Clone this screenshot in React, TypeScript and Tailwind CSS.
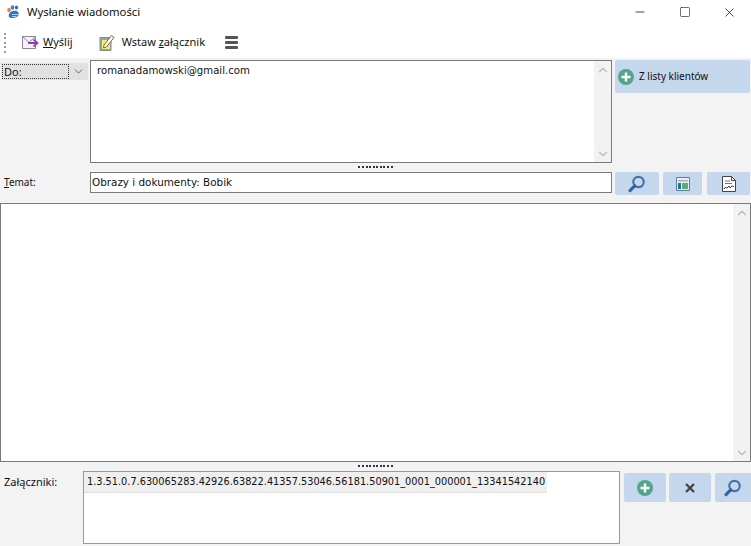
import { ChevronDown, ChevronUp, Minus, Square, X } from "lucide-react";

const FONT_UI = "font-['Noto_Sans','Open_Sans',sans-serif]";
const FONT_FIELD = "font-['DejaVu_Sans',sans-serif]";

function PlusIcon({ size = 16 }: { size?: number }) {
  return (
    <svg width={size} height={size} viewBox="0 0 16 16">
      <circle cx="8" cy="8" r="8" fill="#52a58a" />
      <path d="M8 3.5v9M3.5 8h9" stroke="#fff" strokeWidth="2.4" />
    </svg>
  );
}

function SearchIcon() {
  return (
    <svg width="18" height="18" viewBox="0 0 18 18" fill="none">
      <circle cx="10.5" cy="7" r="5.2" stroke="#3f74ad" strokeWidth="2.2" />
      <path d="M6.800 10.800 2 15.600" stroke="#2f629b" strokeWidth="3" strokeLinecap="round" />
    </svg>
  );
}

function ActionButton({ className, children }: { className: string; children: React.ReactNode }) {
  return (
    <div className={`flex shrink-0 items-center justify-center rounded-[2px] bg-[#c5d7ec] ${className}`}>
      {children}
    </div>
  );
}

function Splitter() {
  return (
    <div className="flex h-[8px] items-center justify-center gap-[1.6px] pb-[1px]">
      {Array.from({ length: 10 }).map((_, i) => (
        <span key={i} className="h-[2px] w-[2px] bg-[#333]" />
      ))}
    </div>
  );
}

function ScrollBar() {
  return (
    <div className="flex w-[17px] shrink-0 flex-col items-center justify-between bg-[#f2f2f2] text-[#bdbdbd]">
      <div className="flex h-[17px] items-center justify-center">
        <ChevronUp size={14} strokeWidth={2.4} />
      </div>
      <div className="flex h-[17px] items-center justify-center">
        <ChevronDown size={14} strokeWidth={2.4} />
      </div>
    </div>
  );
}

export default function App() {
  return (
    <div className={`flex h-[546px] w-[751px] flex-col overflow-hidden bg-[#f3f3f3] text-[11px] text-[#111] ${FONT_UI}`}>
      {/* Title + toolbar */}
      <div className="h-[58px] shrink-0 bg-white">
        <div className="flex h-[24px] items-center">
          <svg className="ml-[6px]" width="15" height="14" viewBox="0 0 15 14">
            <path d="M3 9c1-3 5-4 8-3 2 1 2 3 1 5-2 2-7 3-9 1-.5-1-.5-2 0-3z" fill="#2f78c0" />
            <ellipse cx="3" cy="5" rx="1.800" ry="2.200" fill="#e8873a" />
            <ellipse cx="6.500" cy="2.500" rx="1.800" ry="2.200" fill="#3b86cc" />
            <ellipse cx="10.500" cy="2.500" rx="1.600" ry="2" fill="#2f6fb0" />
            <path d="M6 9.500h6M6 11.500h4" stroke="#a9d0ee" strokeWidth="1" />
          </svg>
          <span className="ml-[6px] text-[11.3px] leading-none">Wysłanie wiadomości</span>
          <div className="ml-auto flex items-center text-[#111]">
            <div className="flex w-[45px] justify-center"><Minus size={14} strokeWidth={1.3} /></div>
            <div className="flex w-[45px] justify-center"><Square size={12} strokeWidth={1.2} /></div>
            <div className="flex w-[44px] justify-center"><X size={15} strokeWidth={1.2} /></div>
          </div>
        </div>
        <div className="flex h-[34px] items-center pt-[3px]">
          <div className="ml-[4px] flex h-[20px] flex-col justify-between">
            {Array.from({ length: 5 }).map((_, i) => (
              <span key={i} className="h-[2px] w-[2px] bg-[#9a9a9a]" />
            ))}
          </div>
          <svg className="ml-[16px]" width="17" height="13" viewBox="0 0 17 13" fill="none">
            <path d="M.5.5h13v12H.5z" fill="#f6f3f8" stroke="#8f8799" />
            <path d="M.5.5 7 6.500l6.500-6" stroke="#8f8799" />
            <path d="M6 7h9M11.500 3.500 15.500 7l-4 3.500" stroke="#8e3fb5" strokeWidth="1.800" />
          </svg>
          <span className="ml-[4px]"><span className="underline">W</span>yślij</span>
          <svg className="ml-[26px]" width="17" height="17" viewBox="0 0 17 17" fill="none">
            <path d="M1 3.500h11v13H1z" fill="#90a4b8" stroke="#7c8c9c" />
            <path d="M3 6h8v9H3z" fill="#f7ee5c" />
            <path d="M5 11 12.500 1.500l2.500 2-7.500 9.500-3 .8z" fill="#fff" stroke="#9a5a2c" />
          </svg>
          <span className="ml-[6px]">Wstaw <span className="underline">z</span>ałącznik</span>
          <div className="ml-[20px] flex h-[13px] flex-col justify-between">
            {Array.from({ length: 3 }).map((_, i) => (
              <span key={i} className="h-[3px] w-[13px] rounded-[1px] bg-[#555]" />
            ))}
          </div>
        </div>
      </div>

      {/* Recipients */}
      <div className="mt-[2px] flex h-[103px] shrink-0">
        <div className="ml-[1px] mt-[3px] flex h-[17px] w-[87px] shrink-0 items-center bg-[#e1e1e1] pl-[1px] pr-[3px]">
          <div className="flex h-[15px] w-[67px] items-center border border-dotted border-[#333] pl-[1px] pt-[1px]">Do:</div>
          <ChevronDown className="ml-auto text-[#444]" size={13} strokeWidth={1.4} />
        </div>
        <div className={`ml-[2px] flex w-[522px] shrink-0 border border-[#7a7a7a] bg-white ${FONT_FIELD}`}>
          <div className="flex-1 pl-[6px] pt-[3px] text-[10.15px] leading-[14px]">romanadamowski@gmail.com</div>
          <ScrollBar />
        </div>
        <div className="ml-[3px] flex h-[33px] w-[135px] items-center rounded-[2px] bg-[#c5d7ec] pl-[3px]">
          <PlusIcon />
          <span className="ml-[5px] text-[10px]">Z listy klientów</span>
        </div>
      </div>
      <Splitter />

      {/* Subject */}
      <div className="mt-[1px] flex h-[23px] shrink-0">
        <div className="ml-[4px] flex w-[86px] shrink-0 items-center pb-[2px] text-[10px]"><span><span className="underline">T</span>emat:</span></div>
        <div className={`flex h-[21px] w-[522px] shrink-0 items-center border border-[#7a7a7a] bg-white pl-[1px] text-[10.4px] ${FONT_FIELD}`}>
          Obrazy i dokumenty: Bobik
        </div>
        <ActionButton className="ml-[3px] h-[23px] w-[44px]"><SearchIcon /></ActionButton>
        <ActionButton className="ml-[4px] h-[23px] w-[39px]">
          <svg width="14" height="14" viewBox="0 0 14 14">
            <path d="M.5.5h13v13H.5z" fill="#e9eef3" stroke="#5b7f9b" />
            <path d="M2 3h10v1.500H2z" fill="#9fb4c4" />
            <path d="M2 6h3v6H2z" fill="#2c6fa8" />
            <path d="M6 6h6v6H6z" fill="#55b06c" />
          </svg>
        </ActionButton>
        <ActionButton className="ml-[5px] h-[23px] w-[43px]">
          <svg width="14" height="16" viewBox="0 0 14 16" fill="none">
            <path d="M.5.500h9l4 4v11H.5z" fill="#fff" stroke="#444" />
            <path d="M9.500.500v4h4" stroke="#444" />
            <path d="M3 5h5M3 7.500h7" stroke="#777" />
            <path d="M2 13c2-4 2 1 4-2s1 3 3 0 1 1 3-1" stroke="#222" />
          </svg>
        </ActionButton>
      </div>

      {/* Message body */}
      <div className="mt-[8px] flex h-[259px] shrink-0 border border-[#7a7a7a] bg-white">
        <div className="flex-1" />
        <ScrollBar />
      </div>
      <Splitter />

      {/* Attachments */}
      <div className="mt-[1px] flex">
        <div className="ml-[4px] w-[79px] shrink-0 pt-[3px]">Załączniki:</div>
        <div className="h-[73px] w-[537px] shrink-0 border border-[#82a0bd] bg-white">
          <div className={`h-[21px] w-[463px] border-b border-b-[#e0e0e0] bg-[#efefef] pl-[3px] text-[9.75px] leading-[20px] whitespace-nowrap ${FONT_FIELD}`}>
            1.3.51.0.7.630065283.42926.63822.41357.53046.56181.50901_0001_000001_13341542140
          </div>
        </div>
        <ActionButton className="ml-[4px] mt-[2px] h-[29px] w-[42px]"><PlusIcon /></ActionButton>
        <ActionButton className="ml-[3px] mt-[2px] h-[29px] w-[42px]">
          <svg width="12" height="12" viewBox="0 0 12 12">
            <path d="M2 2l8 8M10 2l-8 8" stroke="#444" strokeWidth="2.4" />
          </svg>
        </ActionButton>
        <ActionButton className="ml-[4px] mt-[2px] h-[29px] w-[36px] rounded-r-none"><SearchIcon /></ActionButton>
      </div>
    </div>
  );
}
